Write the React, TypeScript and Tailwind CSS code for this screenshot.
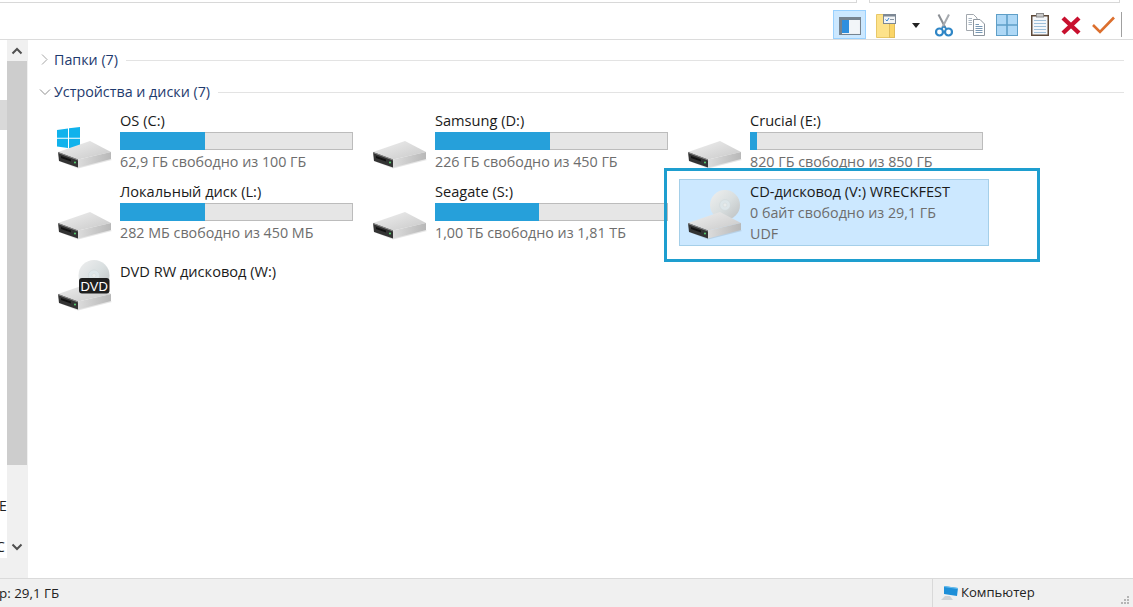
import React from "react";

function Drive({ id }: { id: string }) {
  return (
    <g>
      <defs>
        <linearGradient id={id + "t"} x1="0" y1="0" x2="1" y2="1">
          <stop offset="0" stopColor="#f0f0f0" />
          <stop offset="1" stopColor="#c8c8c8" />
        </linearGradient>
        <linearGradient id={id + "s"} x1="0" y1="0" x2="1" y2="0">
          <stop offset="0" stopColor="#dcdcdc" />
          <stop offset="1" stopColor="#b8b8b8" />
        </linearGradient>
      </defs>
      <polygon points="12,54 29,60.5 63,52 60,50" fill="#000" opacity="0.1" />
      <polygon points="9,44 41,33 62,44 29,51.5" fill={`url(#${id}t)`} />
      <polygon points="29,51.5 62,44 62,51 29,59.5" fill={`url(#${id}s)`} />
      <polygon points="9,44 29,51.5 29,59.5 10,53" fill="#333" />
      <polygon points="9,44 29,51.5 29,52.5 9,45" fill="#8c8c8c" />
      <polygon points="12,48 22,51.5 22,53.5 12,50" fill="#111" />
      <circle cx="26" cy="54.5" r="1" fill="#57d672" />
    </g>
  );
}

function Disc({ id, cx, cy, r }: { id: string; cx: number; cy: number; r: number }) {
  return (
    <g>
      <defs>
        <linearGradient id={id + "d"} x1="0" y1="0" x2="1" y2="1">
          <stop offset="0" stopColor="#efefef" />
          <stop offset="0.5" stopColor="#d9dfe0" />
          <stop offset="1" stopColor="#bcbfc0" />
        </linearGradient>
      </defs>
      <circle cx={cx} cy={cy} r={r} fill={`url(#${id}d)`} />
      <circle cx={cx} cy={cy} r={r * 0.36} fill="#dde6e9" stroke="#cdd4d6" strokeWidth="0.5" />
      <circle cx={cx} cy={cy} r={r * 0.13} fill="#e8ecec" stroke="#d0d4d4" strokeWidth="0.4" />
    </g>
  );
}

function TileIcon({ kind, id }: { kind: string; id: string }) {
  return (
    <svg width="70" height="65" viewBox="1 1 70 65" className="shrink-0">
      {kind === "win" && (
        <g fill="#10b2ec">
          <polygon points="8,22 19,20.5 19,29.7 8,29.7" />
          <polygon points="20,20.3 31,19 31,29.7 20,29.7" />
          <polygon points="8,30.7 19,30.7 19,40 8,38.5" />
          <polygon points="20,30.7 31,30.7 31,41.5 20,40.2" />
        </g>
      )}
      {kind === "cd" && <Disc id={id} cx={46} cy={26} r={15} />}
      {kind === "dvd" && <Disc id={id} cx={45} cy={25.5} r={15.5} />}
      <Drive id={id} />
      {kind === "dvd" && (
        <g>
          <rect x="30" y="28" width="30.5" height="15.5" rx="3" fill="#1f1f1f" />
          <text x="45.2" y="40.5" textAnchor="middle" fontSize="13" fill="#fff" fontFamily="'Liberation Sans', sans-serif">
            DVD
          </text>
        </g>
      )}
    </svg>
  );
}

type T = { name: string; sub?: string; fill?: number; kind: string; extra?: string; sel?: boolean };

const tiles: T[] = [
  { name: "OS (C:)", sub: "62,9 ГБ свободно из 100 ГБ", fill: 85, kind: "win" },
  { name: "Samsung (D:)", sub: "226 ГБ свободно из 450 ГБ", fill: 115, kind: "hd" },
  { name: "Crucial (E:)", sub: "820 ГБ свободно из 850 ГБ", fill: 7, kind: "hd" },
  { name: "Локальный диск (L:)", sub: "282 МБ свободно из 450 МБ", fill: 85, kind: "hd" },
  { name: "Seagate (S:)", sub: "1,00 ТБ свободно из 1,81 ТБ", fill: 104, kind: "hd" },
  { name: "CD-дисковод (V:) WRECKFEST", sub: "0 байт свободно из 29,1 ГБ", extra: "UDF", kind: "cd", sel: true },
  { name: "DVD RW дисковод (W:)", kind: "dvd" },
];

function Tile({ t, i }: { t: T; i: number }) {
  const subCls = "text-[14.3px] leading-[21px] text-[#6d6d6d] whitespace-nowrap";
  const titleCls = "text-[14.6px] text-[#1a1a1a] whitespace-nowrap";
  return (
    <div
      className={
        "h-[67px] flex border " +
        (t.sel ? "bg-[#cce8ff] border-[#a5cfe9]" : "border-transparent")
      }
    >
      <TileIcon kind={t.kind} id={"i" + i} />
      <div className="flex-1 min-w-0">
        {t.fill !== undefined ? (
          <div className="pt-[1px]">
            <div className={titleCls + " leading-[20px]"}>{t.name}</div>
            <div className="mt-[2px] h-[18px] w-[233px] bg-[#e6e6e6] border border-[#bcbcbc] flex">
              <div className="bg-[#26a0da] -m-px h-[18px]" style={{ width: t.fill }} />
            </div>
            <div className={subCls + " mt-[1px]"}>{t.sub}</div>
          </div>
        ) : t.sel ? (
          <div className="pt-[1px]">
            <div className={titleCls + " leading-[21px]"}>{t.name}</div>
            <div className={subCls}>{t.sub}</div>
            <div className={subCls}>{t.extra}</div>
          </div>
        ) : (
          <div className="pt-[10px]">
            <div className={titleCls + " leading-[20px]"}>{t.name}</div>
          </div>
        )}
      </div>
    </div>
  );
}

function Heading({ open, children }: { open?: boolean; children: string }) {
  return (
    <div className="h-[20px] flex items-center pl-[10px] pr-[9px]">
      <svg width="16" height="16" viewBox="0 0 16 16" className="shrink-0">
        {open ? (
          <polyline points="2,5.5 7,10.5 12,5.5" fill="none" stroke="#8f8f8f" strokeWidth="1" />
        ) : (
          <polyline points="4,2.5 9,7.5 4,12.5" fill="none" stroke="#a6a6a6" strokeWidth="1" />
        )}
      </svg>
      <span className="text-[14.3px] leading-[20px] text-[#1e3a6e] whitespace-nowrap">{children}</span>
      <div className="flex-1 h-px bg-[#e3e3e3] ml-[8px]" />
    </div>
  );
}

function Toolbar() {
  return (
    <div className="h-[36px] flex items-start pl-[833px] border-b border-[#dcdcdc] box-content">
      <div className="mt-[7px] w-[33px] h-[29px] bg-[#cce8ff] border border-[#99d1ff] flex items-center justify-center">
        <svg width="22" height="18" viewBox="0 0 22 18" className="mt-[3px]">
          <rect x="0.5" y="0.5" width="21" height="17" fill="#eef1f5" stroke="#76838f" />
          <rect x="0" y="0" width="22" height="3" fill="#76838f" />
          <rect x="1" y="3" width="2" height="14" fill="#76838f" />
          <rect x="3" y="3" width="7" height="13" fill="#2f8fde" />
          <rect x="10" y="3" width="10" height="13" fill="#f2f5f8" />
        </svg>
      </div>
      <svg width="20" height="24" viewBox="0 0 20 24" className="ml-[10px] mt-[11px]">
        <path d="M0.5 0.5H10V5H13V9H18.5V23.5H0.5Z" fill="#fde28a" stroke="#e8c868" />
        <rect x="13.5" y="9.5" width="5" height="14" fill="#fbd567" stroke="#e0bd5c" />
        <rect x="7.5" y="0.5" width="12" height="9" fill="#f2f4f6" stroke="#7d8894" />
        <rect x="8" y="1" width="11" height="1.5" fill="#7d8894" />
        <path d="M9.5 5.5l1.5 1.5 2-3" fill="none" stroke="#3a87d0" strokeWidth="1" />
        <rect x="14" y="5" width="4" height="1" fill="#8a96a2" />
      </svg>
      <svg width="8" height="5" viewBox="0 0 8 5" className="ml-[16px] mt-[20px]">
        <polygon points="0,0 8,0 4,5" fill="#222" />
      </svg>
      <svg width="18" height="23" viewBox="0 0 18 23" className="ml-[15px] mt-[11px]">
        <path d="M3.5 0.5L10.5 14" stroke="#8b8f94" strokeWidth="2" fill="none" />
        <path d="M14 0.5L7 14" stroke="#a7abb0" strokeWidth="2" fill="none" />
        <circle cx="4.5" cy="18" r="3.5" fill="none" stroke="#2f86c6" strokeWidth="2.2" />
        <circle cx="13.5" cy="18" r="3.5" fill="none" stroke="#2f86c6" strokeWidth="2.2" />
        <path d="M6.5 15L8.6 12.5M11.5 15L9.4 12.5" stroke="#2f86c6" strokeWidth="1.6" />
      </svg>
      <svg width="19" height="22" viewBox="0 0 19 22" className="ml-[13px] mt-[11px]">
        <path d="M0.5 0.5H7.5L11 4V16.5H0.5Z" fill="#fff" stroke="#a2a8ae" />
        <path d="M7.5 5.5H14L18.5 10V21.5H7.5Z" fill="#fff" stroke="#8d959d" />
        <path d="M9.5 10.5H13M9.5 12.5H16.5M9.5 14.5H16.5M9.5 16.5H16.5M9.5 18.5H16.5" stroke="#7898b4" strokeWidth="1" />
        <path d="M2.5 4.5H6M2.5 6.5H6M2.5 8.5H6M2.5 10.5H6" stroke="#a9b6c2" strokeWidth="1" />
      </svg>
      <svg width="22" height="22" viewBox="0 0 22 22" className="ml-[11px] mt-[11px]">
        <rect x="0.5" y="0.5" width="21" height="21" fill="#aed8f6" stroke="#5f9fc8" />
        <path d="M11 0V22M0 11H22" stroke="#5f9fc8" strokeWidth="1.6" />
      </svg>
      <svg width="18" height="23" viewBox="0 0 18 23" className="ml-[13px] mt-[10px]">
        <rect x="0.75" y="2.75" width="16.5" height="19.5" fill="#f4f7fa" stroke="#5e4a3a" strokeWidth="1.5" />
        <rect x="5.5" y="0.5" width="7" height="3.5" fill="#c9c9c9" stroke="#8a8a8a" />
        <path d="M3 7.5H15M3 10.5H15M3 13.5H15M3 16.5H15M3 19.5H15" stroke="#9fc0da" strokeWidth="1" />
      </svg>
      <svg width="20" height="19" viewBox="0 0 20 19" className="ml-[12px] mt-[13px]">
        <path d="M2 2L18 17M18 2L2 17" stroke="#c8102e" strokeWidth="4.4" fill="none" />
      </svg>
      <svg width="23" height="18" viewBox="0 0 23 18" className="ml-[11px] mt-[13px]">
        <polyline points="1,9 8,16 22,1.5" fill="none" stroke="#dc6f2e" strokeWidth="2.6" />
      </svg>
      <div className="ml-[6px] mt-[9px] w-px h-[25px] bg-[#a0a0a0]" />
    </div>
  );
}

export default function App() {
  return (
    <div
      className="w-[1133px] h-[607px] overflow-hidden bg-white flex flex-col relative"
      style={{ fontFamily: "'Open Sans', 'Noto Sans', sans-serif" }}
    >
      <div className="h-[3px] flex shrink-0">
        <div className="w-[857px] border-b border-r border-[#d8d8d8]" />
        <div className="ml-[12px] w-[251px] border-b border-l border-r border-[#d8d8d8]" />
      </div>
      <Toolbar />
      <div className="flex-1 flex min-h-0">
        <div className="w-[28px] shrink-0 border-r border-[#f0f0f0] flex flex-col">
          <div className="flex-1 flex min-h-0">
            <div className="w-[7px] flex flex-col overflow-hidden text-[14px] leading-[20px] text-[#222]">
              <div className="h-[60px] shrink-0" />
              <div className="h-[30px] shrink-0 bg-[#d9d9d9]" />
              <div className="h-[366px] shrink-0" />
              <div className="h-[20px] shrink-0 -ml-[1px]">E</div>
              <div className="h-[21px] shrink-0" />
              <div className="h-[20px] shrink-0 -ml-[4px]">C</div>
            </div>
            <div className="w-[20px] bg-[#f0f0f0] flex flex-col">
              <div className="h-[21px] flex items-center justify-center">
                <svg width="12" height="8" viewBox="0 0 12 8">
                  <polyline points="1.5,6.5 6,2 10.5,6.5" fill="none" stroke="#505050" strokeWidth="2" />
                </svg>
              </div>
              <div className="h-[404px] bg-[#cdcdcd]" />
              <div className="flex-1" />
              <div className="h-[20px] flex items-center justify-center mb-[1px] pr-[1px]">
                <svg width="12" height="8" viewBox="0 0 12 8">
                  <polyline points="1.5,1.5 6,6 10.5,1.5" fill="none" stroke="#505050" strokeWidth="2" />
                </svg>
              </div>
            </div>
          </div>
          <div className="h-[20px] shrink-0 bg-[#f0f0f0]" />
        </div>
        <div className="flex-1 min-w-0 pt-[10px]">
          <Heading>Папки (7)</Heading>
          <div className="mt-[12px]">
            <Heading open>Устройства и диски (7)</Heading>
          </div>
          <div className="mt-[6px] ml-[21px] grid grid-cols-[310px_310px_310px] gap-x-[5px] gap-y-[4px]">
            {tiles.map((t, i) => (
              <Tile key={i} t={t} i={i} />
            ))}
          </div>
        </div>
      </div>
      <div className="h-[29px] shrink-0 bg-[#f0f0f0] border-t border-[#dadada] flex items-center text-[#222]">
        <div className="w-[933px] shrink-0 whitespace-nowrap -ml-[1px] text-[13.4px]">р: 29,1 ГБ</div>
        <div className="h-full flex-1 border-l border-[#d9d9d9] flex items-center pl-[7px] relative">
          <svg width="19" height="16" viewBox="0 0 19 16" className="shrink-0">
            <polygon points="4,1 18,3 17,11 4,9" fill="#1e8fd8" />
            <polygon points="4,1 18,3 18,4 4,2" fill="#6cc0ef" />
            <polygon points="1,15 13,15 10,11 5,11" fill="#cfd3d6" />
          </svg>
          <span className="ml-[2px] text-[13.1px]">Компьютер</span>
          <svg width="10" height="10" viewBox="0 0 10 10" className="absolute right-[3px] bottom-[2px]">
            <g fill="#b5b5b5">
              <rect x="7" y="1" width="2" height="2" />
              <rect x="4" y="4" width="2" height="2" />
              <rect x="7" y="4" width="2" height="2" />
              <rect x="1" y="7" width="2" height="2" />
              <rect x="4" y="7" width="2" height="2" />
              <rect x="7" y="7" width="2" height="2" />
            </g>
          </svg>
        </div>
      </div>
      <div className="absolute left-[664px] top-[168px] w-[376px] h-[94px] border-[3px] border-[#1e9ecf] pointer-events-none" />
    </div>
  );
}
